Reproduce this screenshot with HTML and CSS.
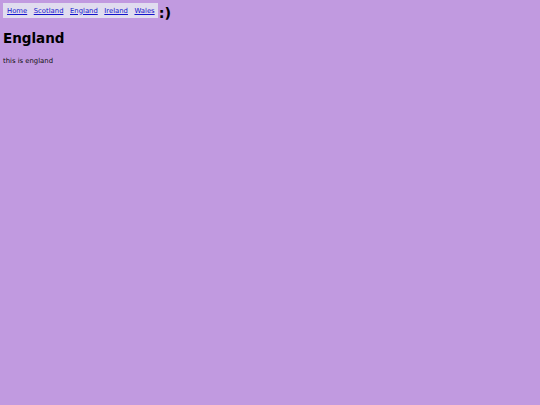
FILE: index.html
```html
<!DOCTYPE html>
<html>
<head>
<meta charset="utf-8">
<link rel="stylesheet" href="styles.css">
</head>
<body>
<header class="top">
  <nav class="nav">
    <a href="#">Home</a>
    <a href="#">Scotland</a>
    <a href="#">England</a>
    <a href="#">Ireland</a>
    <a href="#">Wales</a>
  </nav>
  <span class="smile">:)</span>
</header>
<h1 class="title">England</h1>
<p class="text">this is england</p>
</body>
</html>
```
FILE: styles.css
```css
html, body {
  margin: 0;
  padding: 0;
  background: #c19ae0;
  font-family: "DejaVu Sans", Verdana, sans-serif;
  color: #000;
}
body {
  padding: 3px;
}
.top {
  display: flex;
  align-items: flex-end;
}
.nav {
  display: flex;
  gap: 6.5px;
  background: #e0dcef;
  padding: 3.6px 3px 3.5px 4px;
  font-size: 6.85px;
  line-height: normal;
}
.nav a {
  color: #1414cc;
}
.smile {
  font-size: 14.5px;
  font-weight: bold;
  line-height: 1;
  margin-left: 1px;
  margin-bottom: -2px;
}
.title {
  font-size: 13.5px;
  line-height: normal;
  margin: 12.3px 0 0;
}
.text {
  font-size: 6.85px;
  line-height: normal;
  margin: 10.5px 0 0;
  color: #111;
}
```
